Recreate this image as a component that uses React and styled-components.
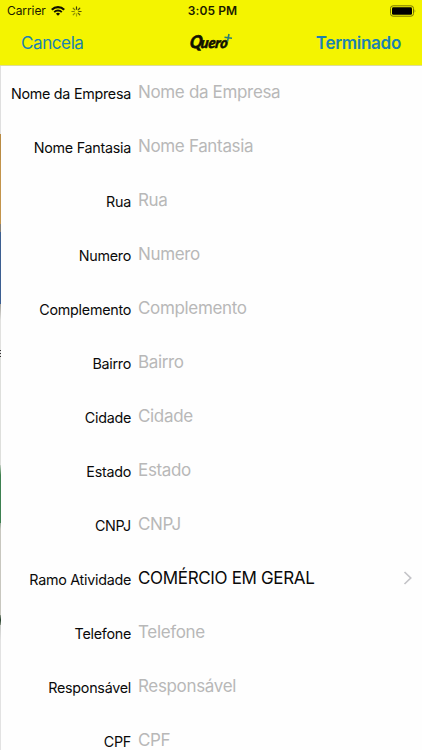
import React from "react";
import styled, { createGlobalStyle } from "styled-components";

const GlobalStyle = createGlobalStyle`
  * { box-sizing: border-box; }
  body { margin: 0; background: #fff; overflow: hidden; }
`;

const Screen = styled.div`
  width: 422px;
  height: 750px;
  overflow: hidden;
  display: flex;
  flex-direction: column;
  background: #fefefe;
  color: #0a0a0a;
  font-family: Inter, "Liberation Sans", sans-serif;
`;

const Header = styled.header`
  flex: none;
  height: 66px;
  background: #f4f400;
  border-bottom: 1px solid #dddd98;
`;

const StatusBar = styled.div`
  height: 21px;
  display: grid;
  grid-template-columns: 1fr auto 1fr;
  align-items: center;
  padding: 1px 6px 0 7px;
`;

const StatusLeft = styled.div`
  display: flex;
  align-items: center;
`;

const StatusText = styled.span`
  font-size: 12px;
  line-height: 20px;
  font-weight: ${(p) => (p.$strong ? 600 : 400)};
  letter-spacing: ${(p) => p.$spacing || "0"};
  padding-left: ${(p) => (p.$strong ? "2px" : "0")};
  color: #1b1b00;
`;

const WifiIcon = styled.svg`
  width: 14px;
  height: 10px;
  margin-left: 5px;
`;

const SpinnerIcon = styled.svg`
  width: 11px;
  height: 11px;
  margin-left: 6px;
`;

const BatteryIcon = styled.svg`
  width: 26px;
  height: 12px;
  justify-self: end;
`;

const NavBar = styled.nav`
  height: 44px;
  display: grid;
  grid-template-columns: 1fr auto 1fr;
  align-items: center;
  padding: 0 21px;
`;

const NavButton = styled.button`
  border: 0;
  padding: 0;
  background: none;
  font-family: inherit;
  font-size: 17px;
  line-height: 24px;
  color: #1b82b0;
  font-weight: ${(p) => (p.$primary ? 600 : 400)};
  letter-spacing: ${(p) => p.$spacing};
  justify-self: ${(p) => (p.$primary ? "end" : "start")};
`;

const Logo = styled.svg`
  width: 46px;
  height: 22px;
`;

const LogoText = styled.text`
  font-family: Lato, sans-serif;
  font-size: ${(p) => p.$size}px;
  font-weight: 900;
  font-style: italic;
  stroke: #111100;
  stroke-width: 0.6px;
`;

const Body = styled.main`
  flex: 1;
  min-height: 0;
  display: flex;
`;

const BackdropEdge = styled.div`
  flex: none;
  width: 1px;
  display: flex;
  flex-direction: column;
`;

const EdgeBand = styled.div`
  flex: none;
  height: ${(p) => p.$height}px;
  background: ${(p) => p.$fill};
`;

const Form = styled.div`
  flex: 1;
`;

const Row = styled.div`
  height: 54px;
  display: grid;
  grid-template-columns: 130px 1fr auto;
  column-gap: 7px;
  align-items: center;
  padding-right: 9px;
`;

const Label = styled.label`
  justify-self: end;
  white-space: nowrap;
  font-size: 14.3px;
  line-height: 20px;
  letter-spacing: -0.26px;
  padding-top: 2px;
`;

const Value = styled.span`
  white-space: nowrap;
  font-size: 17px;
  line-height: 24px;
  padding-bottom: 2px;
  letter-spacing: -0.34px;
  color: ${(p) => (p.$filled ? "#0a0a0a" : "#b8b8b8")};
`;

const Chevron = styled.svg`
  width: 10px;
  height: 16px;
  margin-bottom: 2px;
`;

const bands = [
  [68, "#dfdfdf"],
  [26, "#b98b43"],
  [64, "#c3944b"],
  [8, "#858078"],
  [72, "#3c5f92"],
  [46, "linear-gradient(#a3a19b, #e1e1df 16px)"],
  [1, "#333"],
  [2, "#ddd"],
  [1, "#333"],
  [2, "#ddd"],
  [1, "#333"],
  [108, "#dedfdc"],
  [10, "linear-gradient(#c3cec3, #40814d)"],
  [48, "#3d8050"],
  [92, "linear-gradient(#90a592, #c8c7bf 6px, #c8c7bf)"],
  [10, "linear-gradient(#8d9989, #213b29, #8d9989)"],
  [125, "linear-gradient(#c9cbc8, #e2e2e2 15px)"],
];

const fields = [
  { label: "Nome da Empresa" },
  { label: "Nome Fantasia" },
  { label: "Rua" },
  { label: "Numero" },
  { label: "Complemento" },
  { label: "Bairro" },
  { label: "Cidade" },
  { label: "Estado" },
  { label: "CNPJ" },
  { label: "Ramo Atividade", value: "COMÉRCIO EM GERAL" },
  { label: "Telefone" },
  { label: "Responsável" },
  { label: "CPF" },
];

const spokes = [0, 45, 90, 135, 180, 225, 270, 315];

export default function App() {
  return (
    <Screen>
      <GlobalStyle />
      <Header>
        <StatusBar>
          <StatusLeft>
            <StatusText $spacing="-0.08px">Carrier</StatusText>
            <WifiIcon viewBox="0 0 14 10" fill="none" stroke="#111100">
              <path d="M0.8 3.7a8.8 8.8 0 0 1 12.4 0" strokeWidth="2.2" />
              <path d="M3.2 6.1a5.4 5.4 0 0 1 7.6 0" strokeWidth="1.9" />
              <path d="M7 9.8 4.9 7.7a3 3 0 0 1 4.2 0z" fill="#111100" stroke="none" />
            </WifiIcon>
            <SpinnerIcon viewBox="0 0 11 11" stroke="#33330a" strokeLinecap="round">
              {spokes.map((a, i) => (
                <path
                  key={a}
                  d="M5.5 0.9v2.3"
                  transform={`rotate(${a} 5.5 5.5)`}
                  strokeWidth="1.2"
                  opacity={i < 4 ? 0.95 - i * 0.06 : 0.42 + (i - 4) * 0.08}
                />
              ))}
            </SpinnerIcon>
          </StatusLeft>
          <StatusText $strong $spacing="0.1px">3:05 PM</StatusText>
          <BatteryIcon viewBox="0 0 26 12">
            <rect x="0.5" y="0.8" width="23" height="10.4" rx="2.6" fill="none" stroke="#777700" />
            <rect x="2" y="2.2" width="20" height="7.6" rx="1.3" fill="#000" />
            <path d="M24.7 4.2q1.3 1.8 0 3.6z" fill="#777700" />
          </BatteryIcon>
        </StatusBar>
        <NavBar>
          <NavButton $spacing="-0.4px">Cancela</NavButton>
          <Logo viewBox="0 0 46 22" fill="#111100">
            <g transform="translate(2 0) skewX(-8)">
              <LogoText $size="17.5" x="1.5" y="16.2" textLength="12.5" lengthAdjust="spacingAndGlyphs">Q</LogoText>
              <LogoText $size="15" x="12.5" y="16.2" textLength="27" lengthAdjust="spacingAndGlyphs">uero</LogoText>
            </g>
            <path d="M41 2 39.5 9.5M36.5 5.3l7.5.9" stroke="#287d78" strokeWidth="1.6" />
          </Logo>
          <NavButton $primary $spacing="-0.28px">Terminado</NavButton>
        </NavBar>
      </Header>
      <Body>
        <BackdropEdge>
          {bands.map(([height, fill], i) => (
            <EdgeBand key={i} $height={height} $fill={fill} />
          ))}
        </BackdropEdge>
        <Form>
          {fields.map(({ label, value }) => (
            <Row key={label}>
              <Label>{label}</Label>
              <Value $filled={Boolean(value)}>{value || label}</Value>
              {value && (
                <Chevron viewBox="0 0 10 16" fill="none" stroke="#c4c4c8" strokeWidth="1.7">
                  <path d="m1.5 2 6.2 6-6.2 6" />
                </Chevron>
              )}
            </Row>
          ))}
        </Form>
      </Body>
    </Screen>
  );
}
